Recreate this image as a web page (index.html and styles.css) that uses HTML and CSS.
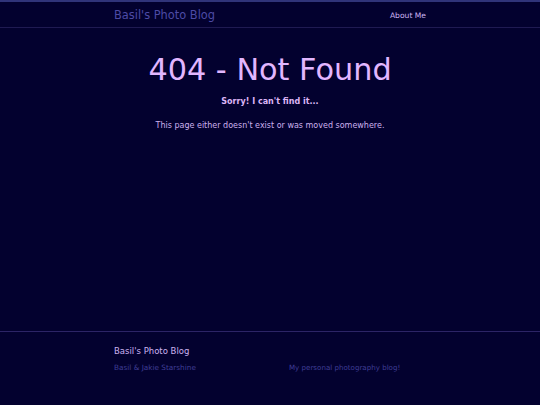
FILE: index.html
```html
<!DOCTYPE html>
<html lang="en">
<head>
<meta charset="utf-8">
<title>404 - Not Found</title>
<link rel="stylesheet" href="styles.css">
</head>
<body>
<div class="page">
  <header class="site-header">
    <div class="wrapper header-inner">
      <a class="site-title" href="#">Basil's Photo Blog</a>
      <nav class="site-nav"><a class="page-link" href="#">About Me</a></nav>
    </div>
  </header>
  <main class="page-content">
    <div class="wrapper error">
      <h1 class="error-title">404 - Not Found</h1>
      <p class="error-sub">Sorry! I can't find it...</p>
      <p class="error-text">This page either doesn't exist or was moved somewhere.</p>
    </div>
  </main>
  <footer class="site-footer">
    <div class="wrapper">
      <h2 class="footer-heading">Basil's Photo Blog</h2>
      <div class="footer-cols">
        <div class="footer-col footer-col-1">Basil &amp; Jakie Starshine</div>
        <div class="footer-col footer-col-2">My personal photography blog!</div>
      </div>
    </div>
  </footer>
</div>
</body>
</html>
```

FILE: styles.css
```css
html, body {
  margin: 0;
  padding: 0;
  background: #03012f;
  font-family: "DejaVu Sans", Verdana, sans-serif;
}
.page {
  min-height: 405px;
  display: flex;
  flex-direction: column;
}
.wrapper {
  width: 312px;
  margin: 0 auto;
}
a { text-decoration: none; }

.site-header {
  border-top: 2px solid #30347a;
  border-bottom: 1px solid #1f1a52;
  height: 25px;
  box-sizing: content-box;
}
.header-inner {
  display: flex;
  justify-content: space-between;
  align-items: center;
  height: 25px;
  padding-top: 1px;
  box-sizing: border-box;
}
.site-title {
  color: #4d4ba6;
  font-size: 11.4px;
}
.site-nav {
  margin-bottom: 1px;
  line-height: 10px;
}
.page-link {
  color: #cdb4f2;
  font-size: 7.6px;
}

.page-content {
  flex: 1;
  padding-top: 24px;
}
.error {
  text-align: center;
}
.error-title {
  margin: 0;
  font-weight: normal;
  font-size: 30.3px;
  line-height: 35px;
  color: #e2b6ff;
}
.error-sub {
  margin: 9px 0 0;
  font-size: 8px;
  line-height: 12px;
  font-weight: bold;
  color: #dcb6f6;
}
.error-text {
  margin: 12px 0 0;
  font-size: 8px;
  line-height: 12px;
  color: #cdb2ee;
}

.site-footer {
  border-top: 1px solid #2c2466;
  height: 74px;
  padding-top: 13px;
  box-sizing: border-box;
}
.footer-heading {
  margin: 0;
  font-weight: normal;
  font-size: 8.5px;
  line-height: 12px;
  color: #cbb3f0;
}
.footer-cols {
  display: flex;
  margin-top: 5px;
  line-height: 12px;
  color: #3f3d96;
}
.footer-col-1 {
  width: 175px;
  font-size: 7.3px;
}
.footer-col-2 {
  font-size: 7.1px;
}
```
